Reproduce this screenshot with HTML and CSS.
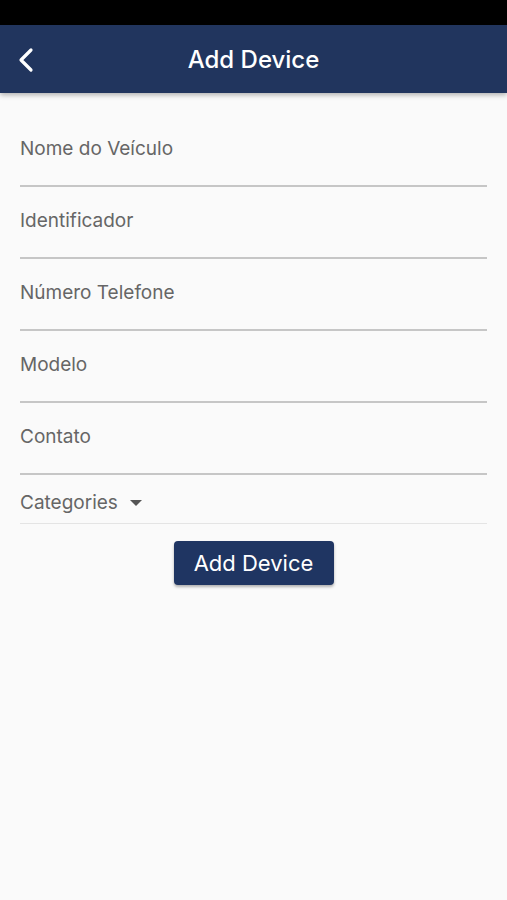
FILE: index.html
```html
<!DOCTYPE html>
<html lang="pt">

<head>
  <meta charset="UTF-8">
  <meta name="viewport" content="width=device-width, initial-scale=1.0">
  <title>Add Device</title>
  <link rel="stylesheet" href="styles.css">
</head>

<body>
  <div class="status-bar"></div>
  <header class="app-bar">
    <button class="back" aria-label="Voltar">
      <svg width="18" height="26" viewBox="0 0 18 26">
        <path d="M14 3 L4 13 L14 23" fill="none" stroke="#fff" stroke-width="3.2" stroke-linecap="round" stroke-linejoin="round" />
      </svg>
    </button>
    <h1>Add Device</h1>
  </header>

  <form class="device-form">
    <label class="field"><input type="text" placeholder="Nome do Veículo"></label>
    <label class="field"><input type="text" placeholder="Identificador"></label>
    <label class="field"><input type="text" placeholder="Número Telefone"></label>
    <label class="field"><input type="text" placeholder="Modelo"></label>
    <label class="field"><input type="text" placeholder="Contato"></label>
    <div class="dropdown">
      <span>Categories</span>
      <span class="caret"></span>
    </div>
    <button type="button" class="submit">Add Device</button>
  </form>
</body>

</html>
```

FILE: styles.css
```css
body {
  margin: 0;
  padding: 0;
  background: #fafafa;
  font-family: "Inter", "Roboto", sans-serif;
  color: #333;
  min-height: 100vh;
}

.status-bar {
  height: 25px;
  background: #000;
}

.app-bar {
  height: 68px;
  background: #21355e;
  display: flex;
  align-items: center;
  justify-content: center;
  position: relative;
  box-shadow: 0 2px 5px rgba(0, 0, 0, 0.3);
}

.app-bar h1 {
  margin: 0;
  color: #fff;
  font-size: 24px;
  font-weight: 500;
}

.back {
  position: absolute;
  left: 17px;
  top: 22px;
  background: none;
  border: none;
  padding: 0;
  cursor: pointer;
}

.device-form {
  padding: 22px 20px 0;
  display: flex;
  flex-direction: column;
}

.field {
  display: block;
  height: 72px;
}

.field input {
  width: 100%;
  box-sizing: border-box;
  height: 72px;
  border: none;
  border-bottom: 2px solid #c6c6c6;
  background: transparent;
  font-family: "Inter", sans-serif;
  font-size: 19px;
  padding: 0 0 4px;
  outline: none;
}

.field input::placeholder {
  color: #666;
}

.dropdown {
  height: 49px;
  padding-top: 7px;
  display: flex;
  align-items: center;
  gap: 10px;
  border-bottom: 1px solid #e4e4e4;
  color: #666;
  font-size: 19px;
  box-sizing: border-box;
}

.caret {
  width: 0;
  height: 0;
  border-left: 6px solid transparent;
  border-right: 6px solid transparent;
  border-top: 6px solid #555;
  margin-left: 2px;
}

.submit {
  align-self: center;
  margin-top: 17px;
  width: 160px;
  height: 44px;
  background: #1f3562;
  color: #fff;
  border: none;
  border-radius: 4px;
  font-family: "Inter", sans-serif;
  font-size: 22px;
  box-shadow: 0 2px 3px rgba(0, 0, 0, 0.3);
  cursor: pointer;
}
```
